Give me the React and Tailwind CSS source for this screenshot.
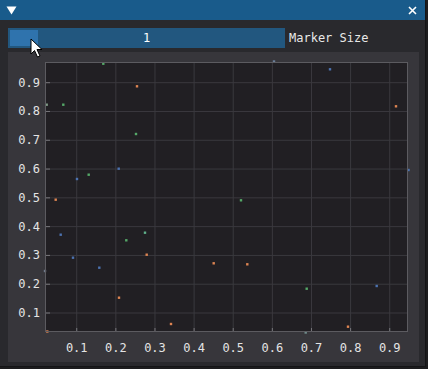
import React from 'react';

const mono = { fontFamily: '"DejaVu Sans Mono", "Liberation Mono", monospace' };

const BLUE = '#4c72b0';
const ORANGE = '#dd8452';
const GREEN = '#55a868';

// page coords of the scatter markers
const points = [
  [103.3, 63.7, GREEN],
  [137, 86.3, ORANGE],
  [46.7, 104.7, '#7f9a86'],
  [63.3, 104.7, GREEN],
  [136, 134, GREEN],
  [118.7, 168.7, BLUE],
  [88.7, 174.7, GREEN],
  [77, 179, BLUE],
  [55.7, 199.7, ORANGE],
  [60.7, 234.7, BLUE],
  [126.3, 240.3, GREEN],
  [145, 232.7, '#5fb08a'],
  [73, 257.7, BLUE],
  [146.7, 254.7, ORANGE],
  [99.3, 267.7, BLUE],
  [213.7, 263.3, ORANGE],
  [119, 297.7, ORANGE],
  [171, 324, ORANGE],
  [47.3, 331.5, ORANGE],
  [274, 61.5, '#6b7f99'],
  [330, 69.3, BLUE],
  [396, 106.3, ORANGE],
  [408.5, 170, BLUE],
  [241, 200.3, GREEN],
  [247.3, 264.3, ORANGE],
  [306.7, 288.7, GREEN],
  [376.7, 286, BLUE],
  [348, 326.7, ORANGE],
  [305.7, 332.5, '#6f8a8a'],
  [45, 271, '#6f7a8a'],
];

const ticks = [0.1, 0.2, 0.3, 0.4, 0.5, 0.6, 0.7, 0.8, 0.9];
// frame-local mapping (frame origin at page 8,52)
const px = (v) => 29.6 + 391.25 * v;
const py = (v) => 289.8 - 287.9 * v;

function Plot() {
  const L = 37, T = 10, R = 400, B = 280;
  return (
    <svg width="411" height="310" className="block">
      <rect x={L} y={T} width={R - L} height={B - T} fill="#211f23" />
      {ticks.map((t) => (
        <g key={'g' + t}>
          <line x1={px(t)} y1={T} x2={px(t)} y2={B} stroke="#3a393e" strokeWidth="1" />
          <line x1={L} y1={py(t)} x2={R} y2={py(t)} stroke="#3a393e" strokeWidth="1" />
          <line x1={px(t)} y1={B - 4} x2={px(t)} y2={B} stroke="#77767b" strokeWidth="1" />
          <line x1={L} y1={py(t)} x2={L + 5} y2={py(t)} stroke="#77767b" strokeWidth="1" />
          <text
            x={px(t)}
            y={B + 20}
            textAnchor="middle"
            fontSize="12"
            fill="#e4e4e4"
            style={mono}
          >
            {t.toFixed(1)}
          </text>
          <text
            x={L - 5}
            y={py(t) + 4}
            textAnchor="end"
            fontSize="12"
            fill="#e4e4e4"
            style={mono}
          >
            {t.toFixed(1)}
          </text>
        </g>
      ))}
      {points.map(([x, y, c], i) => (
        <rect key={i} x={x - 8 - 1.2} y={y - 52 - 1.2} width="2.4" height="2.4" fill={c} />
      ))}
      <rect x={L + 0.5} y={T + 0.5} width={R - L - 1} height={B - T - 1} fill="none" stroke="#5c5b60" strokeWidth="1" />
    </svg>
  );
}

export default function App() {
  return (
    <div className="w-[428px] h-[369px] bg-[#1c1c1e] overflow-hidden" style={mono}>
      <div className="relative w-[426px] h-[367px] bg-[#29292d] border-r border-b border-[#141416]">
        <div className="h-[20px] bg-[#195b8b] flex items-center justify-between pl-[6px] pr-[8px]">
          <svg width="11" height="9" viewBox="0 0 11 9">
            <path d="M0.5 0.5 L10.5 0.5 L5.5 8.5 Z" fill="#ffffff" />
          </svg>
          <svg width="9" height="9" viewBox="0 0 9 9">
            <path d="M1 1 L8 8 M8 1 L1 8" stroke="#ffffff" strokeWidth="1.6" />
          </svg>
        </div>
        <div className="pt-[8px] pl-[8px]">
          <div className="flex items-center gap-[4px] h-[20px]">
            <div className="relative w-[277px] h-[20px] bg-[#22577f] flex items-center justify-center">
              <div className="absolute left-[2px] top-[2px] w-[28px] h-[16px] bg-[#2f73ad]" />
              <span className="relative text-[12px] text-white leading-none">1</span>
            </div>
            <span className="text-[12px] text-[#e8e8e8] leading-none">Marker Size</span>
          </div>
          <div className="mt-[4px] w-[411px] h-[310px] bg-[#37363b]">
            <Plot />
          </div>
        </div>
        <svg className="absolute left-[30px] top-[38px]" width="14" height="21" viewBox="0 0 14 21">
          <path
            d="M1 1 L1 16 L4.5 12.5 L7.5 19 L10 18 L7 11.5 L12 11.5 Z"
            fill="#ffffff"
            stroke="#000000"
            strokeWidth="1"
            strokeLinejoin="round"
          />
        </svg>
      </div>
    </div>
  );
}
